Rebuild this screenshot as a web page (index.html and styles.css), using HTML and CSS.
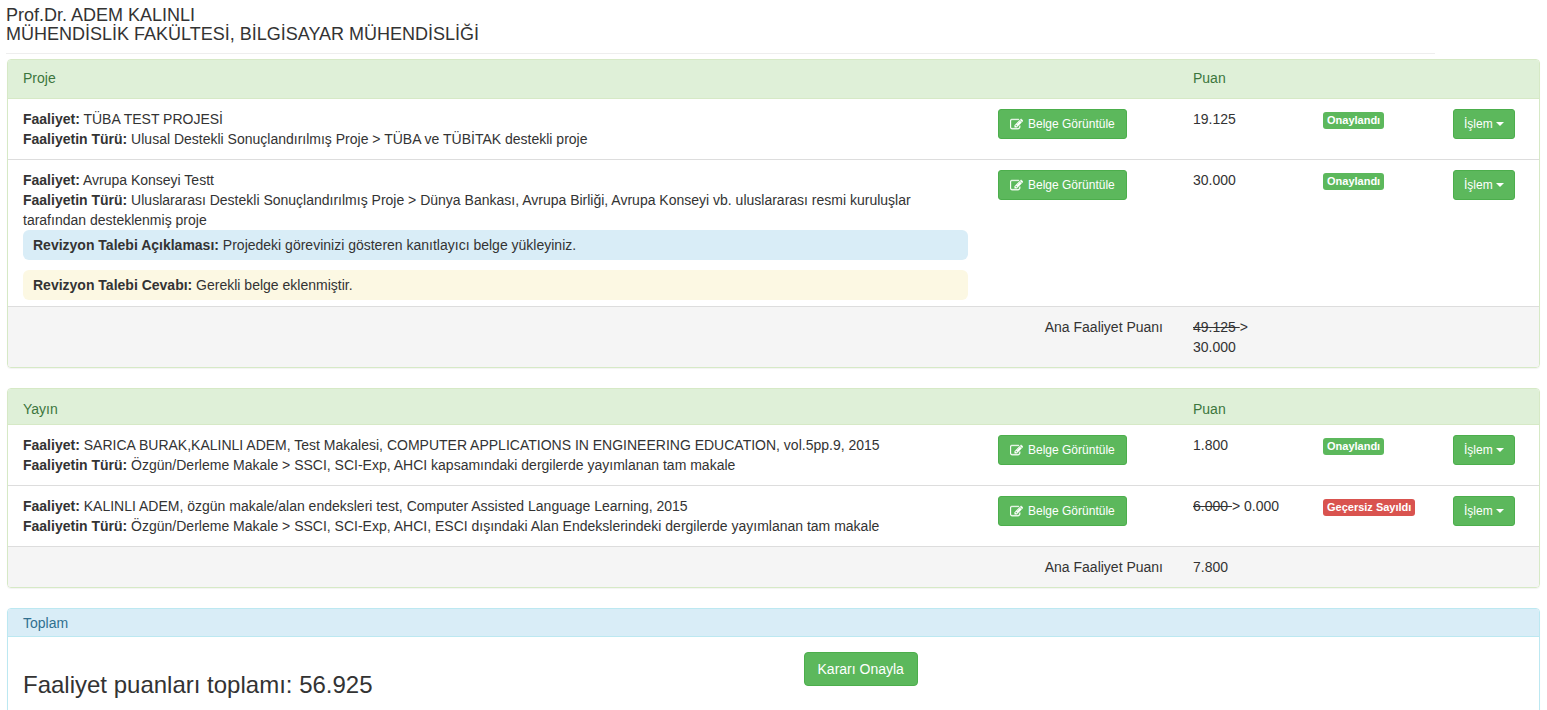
FILE: index.html
```
<!DOCTYPE html>
<html lang="tr">
<head>
<meta charset="utf-8">
<title>Faaliyet Puanları</title>
<link rel="stylesheet" href="styles.css">
</head>
<body>
<svg class="sprite" aria-hidden="true">
  <symbol id="icon-edit" viewBox="0 0 1792 1792">
    <path fill="currentColor" stroke="currentColor" stroke-width="50" d="M888 1184l116-116-152-152-116 116v56h96v96h56zm440-720q-16-16-33 1l-350 350q-17 17-1 33t33-1l350-350q17-17 1-33zm80 594v190q0 119-84.500 203.500t-203.500 84.500h-832q-119 0-203.500-84.500t-84.500-203.500v-832q0-119 84.500-203.500t203.500-84.500h832q63 0 117 25 15 7 18 23 3 17-9 29l-49 49q-14 14-32 8-23-6-45-6h-832q-66 0-113 47t-47 113v832q0 66 47 113t113 47h832q66 0 113-47t47-113v-126q0-13 9-22l64-64q15-15 35-7t20 29zm-96-738l288 288-672 672h-288v-288zm444 132l-92 92-288-288 92-92q28-28 68-28t68 28l152 152q28 28 28 68t-28 68z"/>
  </symbol>
</svg>
<main class="page">
  <header class="person">
    <h1 class="person-title">Prof.Dr. ADEM KALINLI<br>MÜHENDİSLİK FAKÜLTESİ, BİLGİSAYAR MÜHENDİSLİĞİ</h1>
  </header>

  <section class="panel panel-success">
    <table class="activities">
      <colgroup><col><col class="col-doc"><col class="col-score"><col class="col-status"><col class="col-action"></colgroup>
      <thead>
        <tr><th scope="col">Proje</th><th></th><th scope="col">Puan</th><th></th><th></th></tr>
      </thead>
      <tbody>
        <tr>
          <td><b>Faaliyet:</b> TÜBA TEST PROJESİ<br><b>Faaliyetin Türü:</b> Ulusal Destekli Sonuçlandırılmış Proje &gt; TÜBA ve TÜBİTAK destekli proje</td>
          <td><button type="button" class="btn btn-small btn-doc"><svg class="icon" aria-hidden="true"><use href="#icon-edit"/></svg>Belge Görüntüle</button></td>
          <td>19.125</td>
          <td><span class="badge">Onaylandı</span></td>
          <td><button type="button" class="btn btn-small">İşlem<span class="caret"></span></button></td>
        </tr>
        <tr class="with-notes">
          <td><b>Faaliyet:</b> Avrupa Konseyi Testt<br><b>Faaliyetin Türü:</b> Uluslararası Destekli Sonuçlandırılmış Proje &gt; Dünya Bankası, Avrupa Birliği, Avrupa Konseyi vb. uluslararası resmi kuruluşlar tarafından desteklenmiş proje
            <p class="note note-info"><b>Revizyon Talebi Açıklaması:</b> Projedeki görevinizi gösteren kanıtlayıcı belge yükleyiniz.</p>
            <p class="note note-warning"><b>Revizyon Talebi Cevabı:</b> Gerekli belge eklenmiştir.</p>
          </td>
          <td><button type="button" class="btn btn-small btn-doc"><svg class="icon" aria-hidden="true"><use href="#icon-edit"/></svg>Belge Görüntüle</button></td>
          <td>30.000</td>
          <td><span class="badge">Onaylandı</span></td>
          <td><button type="button" class="btn btn-small">İşlem<span class="caret"></span></button></td>
        </tr>
      </tbody>
      <tfoot>
        <tr><td class="total-label" colspan="2">Ana Faaliyet Puanı</td><td><s>49.125 </s>&gt; 30.000</td><td></td><td></td></tr>
      </tfoot>
    </table>
  </section>

  <section class="panel panel-success">
    <table class="activities activities-compact">
      <colgroup><col><col class="col-doc"><col class="col-score"><col class="col-status"><col class="col-action"></colgroup>
      <thead>
        <tr><th scope="col">Yayın</th><th></th><th scope="col">Puan</th><th></th><th></th></tr>
      </thead>
      <tbody>
        <tr>
          <td><b>Faaliyet:</b> SARICA BURAK,KALINLI ADEM, Test Makalesi, COMPUTER APPLICATIONS IN ENGINEERING EDUCATION, vol.5pp.9, 2015<br><b>Faaliyetin Türü:</b> Özgün/Derleme Makale &gt; SSCI, SCI-Exp, AHCI kapsamındaki dergilerde yayımlanan tam makale</td>
          <td><button type="button" class="btn btn-small btn-doc"><svg class="icon" aria-hidden="true"><use href="#icon-edit"/></svg>Belge Görüntüle</button></td>
          <td>1.800</td>
          <td><span class="badge">Onaylandı</span></td>
          <td><button type="button" class="btn btn-small">İşlem<span class="caret"></span></button></td>
        </tr>
        <tr>
          <td><b>Faaliyet:</b> KALINLI ADEM, özgün makale/alan endeksleri test, Computer Assisted Language Learning, 2015<br><b>Faaliyetin Türü:</b> Özgün/Derleme Makale &gt; SSCI, SCI-Exp, AHCI, ESCI dışındaki Alan Endekslerindeki dergilerde yayımlanan tam makale</td>
          <td><button type="button" class="btn btn-small btn-doc"><svg class="icon" aria-hidden="true"><use href="#icon-edit"/></svg>Belge Görüntüle</button></td>
          <td><s>6.000 </s>&gt; 0.000</td>
          <td><span class="badge badge-danger">Geçersiz Sayıldı</span></td>
          <td><button type="button" class="btn btn-small">İşlem<span class="caret"></span></button></td>
        </tr>
      </tbody>
      <tfoot>
        <tr><td class="total-label" colspan="2">Ana Faaliyet Puanı</td><td>7.800</td><td></td><td></td></tr>
      </tfoot>
    </table>
  </section>

  <section class="panel panel-info">
    <h2 class="panel-heading">Toplam</h2>
    <div class="summary">
      <p class="summary-total">Faaliyet puanları toplamı: 56.925</p>
      <div><button type="button" class="btn">Kararı Onayla</button></div>
    </div>
  </section>
</main>
</body>
</html>
```
FILE: styles.css
```
* { box-sizing: border-box; }

body {
  margin: 0;
  font-family: "Liberation Sans", Arial, sans-serif;
  font-size: 14px;
  line-height: 20px;
  color: #333;
  background: #fff;
}

.sprite { display: none; }

.page { padding: 6px 7px 0; }

.person {
  margin: 0 105px 5px -1px;
  padding-bottom: 9px;
  border-bottom: 1px solid #eee;
}

.person-title {
  margin: 0;
  font-size: 18px;
  font-weight: 400;
  line-height: 19px;
}

.panel {
  margin-bottom: 20px;
  border: 1px solid #d6e9c6;
  border-radius: 4px;
  box-shadow: 0 1px 1px rgba(0, 0, 0, .05);
  overflow: hidden;
}

.panel-info { border-color: #bce8f1; }

.activities {
  width: 100%;
  table-layout: fixed;
  border-spacing: 0;
}

.col-doc { width: 195px; }
.col-score, .col-status { width: 130px; }
.col-action { width: 101px; }

.activities th {
  padding: 8px 15px 10px;
  font-weight: 400;
  text-align: left;
  color: #3c763d;
  background: #dff0d8;
  border-bottom: 1px solid #d6e9c6;
}

.activities-compact th { padding: 10px 15px 5px; }

.activities td {
  padding: 10px 15px;
  vertical-align: top;
}

.activities tbody td { border-bottom: 1px solid #ddd; }
.activities tfoot td { background: #f5f5f5; }
.activities .with-notes td { padding-bottom: 6px; }
.activities .total-label { text-align: right; }

.note {
  margin: 0;
  padding: 5px 10px;
  border-radius: 6px;
}

.note + .note { margin-top: 10px; }
.note-info { background: #d9edf7; }
.note-warning { background: #fcf8e3; }

.btn {
  display: inline-flex;
  align-items: center;
  justify-content: center;
  padding: 6px 13px;
  border: 1px solid #4cae4c;
  border-radius: 4px;
  font: inherit;
  color: #fff;
  background: #5cb85c;
  white-space: nowrap;
  vertical-align: top;
  cursor: pointer;
}

.btn-small {
  padding: 5px 10px;
  border-radius: 3px;
  font-size: 12px;
  line-height: 18px;
}

.btn-doc { padding: 5px 11px; }

.icon {
  width: 13px;
  height: 13px;
  margin-right: 5px;
}

.caret {
  margin-left: 3px;
  border: 4px solid transparent;
  border-top-color: #fff;
  border-bottom: 0;
}

.badge {
  display: block;
  width: fit-content;
  margin-top: 3px;
  padding: 2px 4px 3px;
  border-radius: 3px;
  font-size: 11px;
  font-weight: 700;
  line-height: 12px;
  color: #fff;
  background: #5cb85c;
  white-space: nowrap;
}

.badge-danger { background: #d9534f; }

.panel-heading {
  margin: 0;
  padding: 4px 15px 3px;
  font-size: 14px;
  font-weight: 400;
  color: #31708f;
  background: #d9edf7;
  border-bottom: 1px solid #bce8f1;
}

.summary {
  display: grid;
  grid-template-columns: 52% 1fr;
  padding: 15px;
}

.summary-total {
  margin: 20px 0 10px;
  font-size: 24px;
  line-height: 26px;
}
```
